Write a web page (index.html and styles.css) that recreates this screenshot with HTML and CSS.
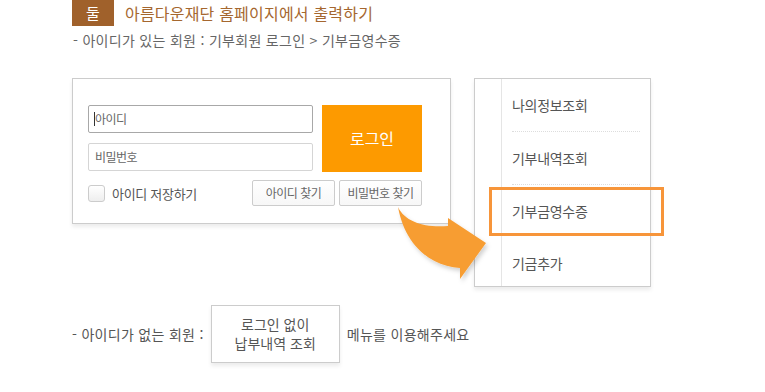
FILE: index.html
```html
<!DOCTYPE html>
<html lang="ko">
<head>
  <meta charset="UTF-8">
  <title>기부금영수증 출력 안내</title>
  <link rel="stylesheet" href="styles.css">
</head>
<body>
  <div class="page">
    <div class="heading">
      <span class="badge">둘</span>
      <h2 class="title">아름다운재단 홈페이지에서 출력하기</h2>
    </div>
    <p class="path">- 아이디가 있는 회원 : 기부회원 로그인 &gt; 기부금영수증</p>

    <div class="demo">
      <div class="login-box">
        <div class="login-main">
          <div class="fields">
            <div class="field focused"><span class="caret"></span>아이디</div>
            <div class="field">비밀번호</div>
          </div>
          <div class="login-btn">로그인</div>
        </div>
        <div class="login-sub">
          <div class="save"><span class="check"></span>아이디 저장하기</div>
          <div class="find">
            <span class="find-btn">아이디 찾기</span>
            <span class="find-btn">비밀번호 찾기</span>
          </div>
        </div>
      </div>

      <div class="menu-box">
        <ul class="menu">
          <li>나의정보조회</li>
          <li>기부내역조회</li>
          <li>기부금영수증</li>
          <li>기금추가</li>
        </ul>
        <div class="highlight"></div>
      </div>
    </div>

    <div class="guest">
      <span>- 아이디가 없는 회원 :</span>
      <div class="guest-box">로그인 없이<br>납부내역 조회</div>
      <span>메뉴를 이용해주세요</span>
    </div>

    <!-- arrow from the login box to the menu -->
    <svg class="arrow" width="765" height="392" viewBox="0 0 765 392">
      <defs>
        <filter id="shadow" x="-20%" y="-20%" width="140%" height="140%">
          <feDropShadow dx="2" dy="3" stdDeviation="2" flood-color="#000" flood-opacity="0.18"/>
        </filter>
      </defs>
      <path d="M398,207 C405,222 425,228 448,226 L448,218 L486,243 L460,279 L460,268 C430,266 405,245 398,207 Z" fill="#f79d33" filter="url(#shadow)"/>
    </svg>
  </div>
</body>
</html>
```

FILE: styles.css
```css
body {
  margin: 0;
  padding: 0;
  background-color: #fff;
  font-family: "Noto Sans CJK KR", "Noto Sans", sans-serif;
  color: #555;
}

.page {
  position: relative;
  width: 765px;
  height: 392px;
  padding-left: 72px;
  box-sizing: border-box;
}

.heading {
  display: flex;
  align-items: center;
  height: 26px;
}

.badge {
  width: 42px;
  height: 26px;
  line-height: 26px;
  background-color: #a0612b;
  color: #fff;
  font-size: 15px;
  text-align: center;
}

.title {
  margin: 0 0 0 11px;
  font-size: 16px;
  font-weight: 400;
  letter-spacing: 0.2px;
  line-height: 26px;
  color: #a5672f;
}

.path {
  margin: 4px 0 0 1px;
  font-size: 14px;
  line-height: 20px;
  letter-spacing: 0.3px;
  color: #666;
}

.demo {
  display: flex;
  align-items: flex-start;
  margin-top: 28px;
}

/* login box */
.login-box {
  width: 379px;
  height: 146px;
  box-sizing: border-box;
  padding: 26px 28px 17px 15px;
  border: 1px solid #ccc;
  box-shadow: 0 3px 4px rgba(0, 0, 0, 0.08);
}

.login-main {
  display: flex;
  gap: 9px;
}

.fields {
  display: flex;
  flex-direction: column;
  gap: 10px;
  width: 225px;
}

.field {
  position: relative;
  height: 28px;
  box-sizing: border-box;
  border: 1px solid #d5d5d5;
  border-radius: 2px;
  padding-left: 6px;
  font-size: 12px;
  line-height: 26px;
  letter-spacing: -0.5px;
  color: #666;
}

.field.focused {
  border-color: #a8a8a8;
}

.caret {
  position: absolute;
  left: 5px;
  top: 6px;
  width: 1px;
  height: 14px;
  background-color: #333;
}

.login-btn {
  width: 100px;
  height: 67px;
  line-height: 67px;
  background-color: #fd9a00;
  color: #fff;
  font-size: 16px;
  text-align: center;
}

.login-sub {
  display: flex;
  justify-content: space-between;
  align-items: center;
  margin-top: 8px;
  height: 26px;
}

.save {
  display: flex;
  align-items: center;
  gap: 7px;
  font-size: 13px;
  letter-spacing: -0.3px;
  color: #555;
}

.check {
  width: 17px;
  height: 17px;
  box-sizing: border-box;
  border: 1px solid #ccc;
  border-radius: 3px;
  background: linear-gradient(#fff, #eee);
}

.find {
  display: flex;
  gap: 4px;
}

.find-btn {
  width: 83px;
  height: 26px;
  box-sizing: border-box;
  border: 1px solid #ccc;
  border-radius: 2px;
  background: linear-gradient(#fff, #f7f7f7);
  font-size: 12px;
  line-height: 24px;
  letter-spacing: -0.5px;
  text-align: center;
  color: #666;
}

/* menu box */
.menu-box {
  position: relative;
  width: 177px;
  height: 209px;
  box-sizing: border-box;
  margin-left: 23px;
  padding-left: 26px;
  border: 1px solid #ccc;
  box-shadow: 0 3px 4px rgba(0, 0, 0, 0.08);
}

.menu {
  list-style: none;
  margin: 0;
  padding: 0 0 0 10px;
  height: 100%;
  border-left: 1px solid #e5e5e5;
}

.menu li {
  width: 128px;
  height: 52px;
  line-height: 52px;
  font-size: 14px;
  letter-spacing: -0.3px;
  color: #555;
  border-bottom: 1px dotted #ddd;
}

.menu li:nth-child(3),
.menu li:last-child {
  border-bottom: none;
}

.highlight {
  position: absolute;
  left: 14px;
  top: 108px;
  width: 175px;
  height: 49px;
  box-sizing: border-box;
  border: 3px solid #f7953a;
}

/* guest row */
.guest {
  display: flex;
  align-items: center;
  gap: 7px;
  margin-top: 18px;
  font-size: 14px;
  letter-spacing: 0.3px;
  color: #555;
}

.guest-box {
  width: 129px;
  height: 58px;
  box-sizing: border-box;
  padding-top: 9px;
  border: 1px solid #ccc;
  box-shadow: 0 3px 4px rgba(0, 0, 0, 0.08);
  font-size: 14px;
  line-height: 19px;
  letter-spacing: 0;
  text-align: center;
}

.arrow {
  position: absolute;
  left: 0;
  top: 0;
  pointer-events: none;
}
```
